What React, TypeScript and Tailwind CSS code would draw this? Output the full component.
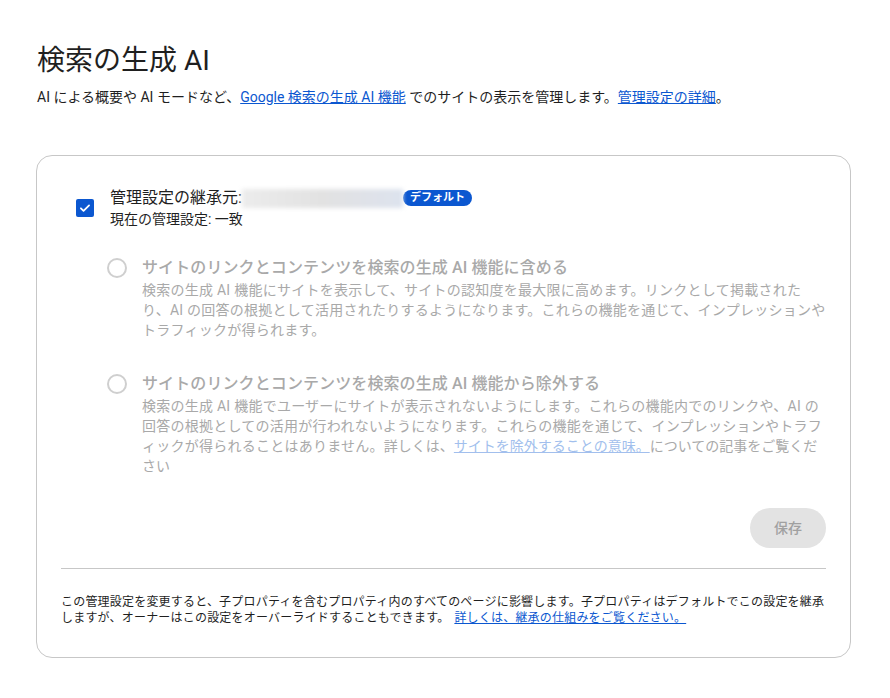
import React from 'react';

const font = 'font-["Roboto","Noto_Sans_CJK_JP",sans-serif]';

function RadioOption({ title, children }: { title: string; children: React.ReactNode }) {
  return (
    <div className="flex items-start ml-[46px]">
      <div className="w-5 h-5 mt-[2px] rounded-full border-2 border-[#cfcfcf] shrink-0"></div>
      <div className="ml-[15px]">
        <div className="text-[16px] leading-[24px] font-medium tracking-[0.1px] text-[#a9a9a9]">{title}</div>
        <p className="w-[684px] text-[14px] leading-[20px] tracking-[0.25px] text-[#a9a9a9]">{children}</p>
      </div>
    </div>
  );
}

export default function App() {
  return (
    <div className={`${font} bg-white min-h-screen text-[#1f1f1f] pl-[36px] pr-[39px] pt-[43px]`}>
      {/* Header */}
      <h1 className="text-[28px] leading-[36px] font-normal pl-px">検索の生成 AI</h1>
      <p className="mt-2 text-[14px] leading-[20px] pl-px">
        AI による概要や AI モードなど、
        <a href="#" className="text-[#0b57d0] underline">Google 検索の生成 AI 機能</a>
        {' '}でのサイトの表示を管理します。
        <a href="#" className="text-[#0b57d0] underline">管理設定の詳細</a>。
      </p>

      {/* Card */}
      <div className="mt-[48px] border border-[#c7c7c7] rounded-[16px] px-6 pt-[31px] pb-[31px]">
        <div className="flex items-center ml-[15px]">
          <div className="w-[18px] h-[18px] rounded-[2px] bg-[#0b57d0] flex items-center justify-center shrink-0">
            <svg viewBox="0 0 24 24" className="w-[14px] h-[14px]" fill="none" stroke="white" strokeWidth="3" strokeLinecap="round" strokeLinejoin="round">
              <path d="M5 12.5l4.5 4.5L19 7.5" />
            </svg>
          </div>
          <div className="ml-4">
            <div className="flex items-center text-[16px] leading-[22px]">
              <span>管理設定の継承元:</span>
              <span className="w-[161px] h-[19px] bg-gradient-to-r from-[#ececec] via-[#e2e2e2] to-[#dde3ee] blur-[2px]"></span>
              <span className="bg-[#0b57d0] text-white text-[11px] leading-[16px] font-bold rounded-full px-[7px]">デフォルト</span>
            </div>
            <div className="text-[14px] leading-[20px]">現在の管理設定: 一致</div>
          </div>
        </div>

        <div className="mt-[27px]">
          <RadioOption title="サイトのリンクとコンテンツを検索の生成 AI 機能に含める">
            検索の生成 AI 機能にサイトを表示して、サイトの認知度を最大限に高めます。リンクとして掲載されたり、AI の回答の根拠として活用されたりするようになります。これらの機能を通じて、インプレッションやトラフィックが得られます。
          </RadioOption>
        </div>
        <div className="mt-[32px]">
          <RadioOption title="サイトのリンクとコンテンツを検索の生成 AI 機能から除外する">
            検索の生成 AI 機能でユーザーにサイトが表示されないようにします。これらの機能内でのリンクや、AI の回答の根拠としての活用が行われないようになります。これらの機能を通じて、インプレッションやトラフィックが得られることはありません。
            <span className="tracking-normal">
              詳しくは、
              <a href="#" className="text-[#a2bfed] underline">サイトを除外することの意味。</a>
              についての記事をご覧ください
            </span>
          </RadioOption>
        </div>

        <div className="flex justify-end mt-[32px]">
          <button className="w-[76px] h-10 rounded-full bg-[#e3e3e3] text-[#a0a0a0] text-[14px] font-medium">保存</button>
        </div>

        <div className="mt-5 border-t border-[#c7c7c7]"></div>

        <p className="mt-[25px] text-[12px] leading-[16px] tracking-[0.2px]">
          この管理設定を変更すると、子プロパティを含むプロパティ内のすべてのページに影響します。子プロパティはデフォルトでこの設定を継承しますが、オーナーはこの設定をオーバーライドすることもできます。
          <a href="#" className="text-[#0b57d0] underline ml-[5px]">詳しくは、継承の仕組みをご覧ください。</a>
        </p>
      </div>
    </div>
  );
}
